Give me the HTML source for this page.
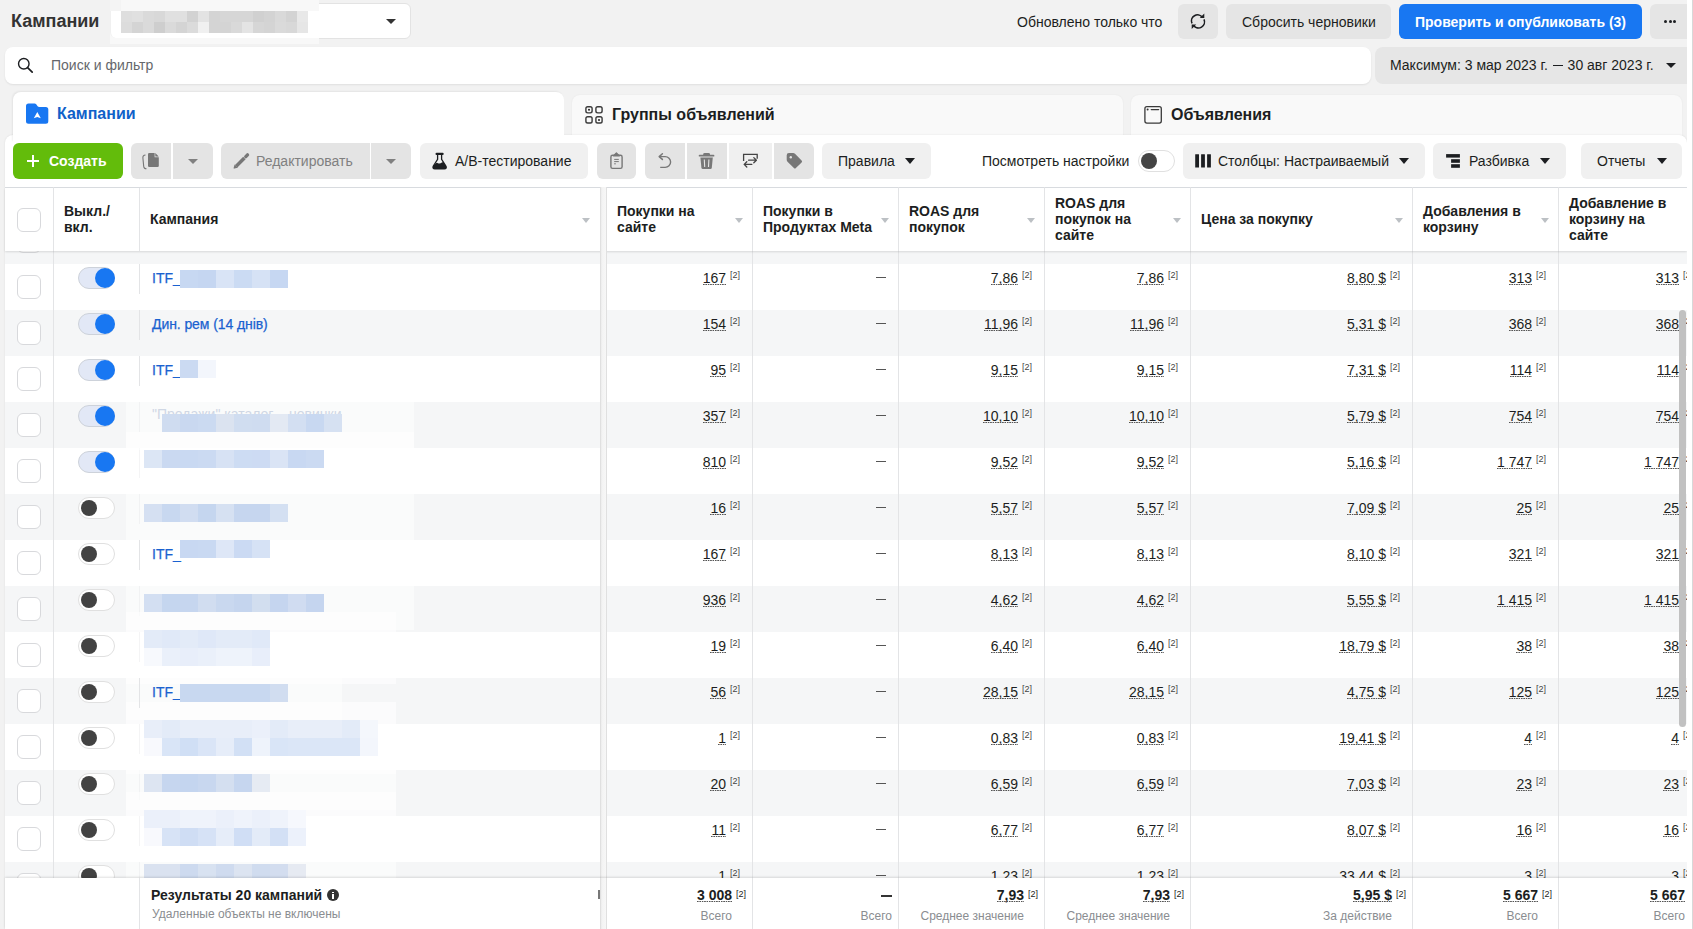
<!DOCTYPE html><html><head><meta charset="utf-8"><style>
*{box-sizing:border-box;margin:0;padding:0}
html,body{width:1693px;height:929px;overflow:hidden;background:#f2f2f2;font-family:"Liberation Sans",sans-serif;color:#1c1e21}
.a{position:absolute}
.btn{position:absolute;border-radius:6px;background:#e5e5e5}
.t14{font-size:14px;line-height:16px;white-space:nowrap}
.num{position:absolute;font-size:14px;line-height:16px;white-space:nowrap;color:#1c1e21}
.num u{text-decoration:none;position:relative}.num u::after{content:'';position:absolute;left:0;right:0;top:14px;height:1px;background-image:linear-gradient(to right,#555 55%,transparent 55%);background-size:2.4px 1px}
.sup{position:absolute;font-size:9px;line-height:10px;color:#444;white-space:nowrap}
.hd{position:absolute;font-size:14px;line-height:16px;font-weight:700;color:#1c1e21}
.sort{position:absolute;width:0;height:0;border-left:4px solid transparent;border-right:4px solid transparent;border-top:5px solid #bcc0c4}
.caret{position:absolute;width:0;height:0;border-left:6px solid transparent;border-right:6px solid transparent;border-top:6px solid #1c1e21}
.vl{position:absolute;width:1px;background:#e3e4e6}
.cb{position:absolute;width:24px;height:24px;border:1px solid #d8d9dc;border-radius:6px;background:#fff}
.tg{position:absolute;width:36.5px;height:21.3px;border-radius:11px}
.tg.on{background:#e2e8f6;border:1px solid #cdd2da}
.tg.off{background:#fff;border:1px solid #e0e0e0}
.knob{position:absolute;width:20px;height:20px;border-radius:50%}
.tg.on .knob{background:#1877f2;right:-1.2px;top:-0.4px;width:20.4px;height:20.4px}
.tg.off .knob{background:#424242;left:1.4px;top:1.6px;width:16.2px;height:16.2px}
.blk{position:absolute}
</style></head><body><div class="a" style="left:11px;top:10px;font-size:18px;line-height:22px;font-weight:700;color:#333">Кампании</div>
<div class="a" style="left:112px;top:3px;width:299px;height:36px;background:#fff;border:1px solid #e3e3e3;border-radius:6px"></div>
<div class="a" style="left:110px;top:0;width:209px;height:44px;background:#f8f8f8"></div>
<div class="a" style="left:110px;top:0;width:11px;height:11px;background:#f4f4f4"></div>
<div class="a" style="left:110px;top:11px;width:209px;height:27px;background:#fff;border-bottom-left-radius:6px;border-left:1px solid #f0f0f0"></div>
<div class="a" style="left:121px;top:33px;width:198px;height:5px;background:#fff"></div>
<div class="blk" style="left:121px;top:11px;width:11px;height:11px;background:#dedede"></div>
<div class="blk" style="left:132px;top:11px;width:11px;height:11px;background:#e0e0e0"></div>
<div class="blk" style="left:143px;top:11px;width:11px;height:11px;background:#dadada"></div>
<div class="blk" style="left:154px;top:11px;width:11px;height:11px;background:#d8d8d8"></div>
<div class="blk" style="left:165px;top:11px;width:11px;height:11px;background:#e0e0e0"></div>
<div class="blk" style="left:176px;top:11px;width:11px;height:11px;background:#e0e0e0"></div>
<div class="blk" style="left:187px;top:11px;width:11px;height:11px;background:#d2d2d2"></div>
<div class="blk" style="left:198px;top:11px;width:11px;height:11px;background:#e3e3e3"></div>
<div class="blk" style="left:209px;top:11px;width:11px;height:11px;background:#d4d4d4"></div>
<div class="blk" style="left:220px;top:11px;width:11px;height:11px;background:#d6d6d6"></div>
<div class="blk" style="left:231px;top:11px;width:11px;height:11px;background:#d6d6d6"></div>
<div class="blk" style="left:242px;top:11px;width:11px;height:11px;background:#d6d6d6"></div>
<div class="blk" style="left:253px;top:11px;width:11px;height:11px;background:#d0d0d0"></div>
<div class="blk" style="left:264px;top:11px;width:11px;height:11px;background:#d3d3d3"></div>
<div class="blk" style="left:275px;top:11px;width:11px;height:11px;background:#d9d9d9"></div>
<div class="blk" style="left:286px;top:11px;width:11px;height:11px;background:#d3d3d3"></div>
<div class="blk" style="left:297px;top:11px;width:11px;height:11px;background:#e8e8e8"></div>
<div class="blk" style="left:121px;top:22px;width:11px;height:11px;background:#dcdcdc"></div>
<div class="blk" style="left:132px;top:22px;width:11px;height:11px;background:#d4d4d4"></div>
<div class="blk" style="left:143px;top:22px;width:11px;height:11px;background:#dadada"></div>
<div class="blk" style="left:154px;top:22px;width:11px;height:11px;background:#cecece"></div>
<div class="blk" style="left:165px;top:22px;width:11px;height:11px;background:#dadada"></div>
<div class="blk" style="left:176px;top:22px;width:11px;height:11px;background:#d4d4d4"></div>
<div class="blk" style="left:187px;top:22px;width:11px;height:11px;background:#dbdbdb"></div>
<div class="blk" style="left:198px;top:22px;width:11px;height:11px;background:#f0f0f0"></div>
<div class="blk" style="left:209px;top:22px;width:11px;height:11px;background:#d4d4d4"></div>
<div class="blk" style="left:220px;top:22px;width:11px;height:11px;background:#d4d4d4"></div>
<div class="blk" style="left:231px;top:22px;width:11px;height:11px;background:#d9d9d9"></div>
<div class="blk" style="left:242px;top:22px;width:11px;height:11px;background:#e4e4e4"></div>
<div class="blk" style="left:253px;top:22px;width:11px;height:11px;background:#d6d6d6"></div>
<div class="blk" style="left:264px;top:22px;width:11px;height:11px;background:#d4d4d4"></div>
<div class="blk" style="left:275px;top:22px;width:11px;height:11px;background:#dadada"></div>
<div class="blk" style="left:286px;top:22px;width:11px;height:11px;background:#d8d8d8"></div>
<div class="blk" style="left:297px;top:22px;width:11px;height:11px;background:#e6e6e6"></div>
<div class="caret" style="left:386px;top:19px;border-left-width:5px;border-right-width:5px;border-top-width:5px;border-top-color:#333"></div>
<div class="a t14" style="left:1017px;top:14px;color:#1c1e21">Обновлено только что</div>
<div class="btn" style="left:1178px;top:4px;width:40px;height:35px"></div>
<svg class="a" style="left:1184px;top:8px" width="30" height="28" viewBox="1184 8 30 28" ><g fill="none" stroke="#1c1e21" stroke-width="1.6"><path d="M1192 23.4A6.1 6.1 0 0 1 1202.4 17.2"/><path d="M1204 19.4A6.1 6.1 0 0 1 1193.6 25.6"/></g><path d="M1204.3 13.6L1204.3 18.1 1199.8 18.1Z M1191.7 29L1191.7 24.5 1196.2 24.5Z" fill="#1c1e21"/></svg>
<div class="btn" style="left:1226px;top:4px;width:165px;height:35px"></div>
<div class="a t14" style="left:1242px;top:14px">Сбросить черновики</div>
<div class="btn" style="left:1399px;top:4px;width:243px;height:35px;background:#1877f2"></div>
<div class="a t14" style="left:1415px;top:14px;color:#fff;font-weight:700">Проверить и опубликовать (3)</div>
<div class="btn" style="left:1650px;top:4px;width:37px;height:35px;border-radius:6px 0 0 6px"></div>
<div class="a" style="left:1663.9px;top:19.7px;width:3.2px;height:3.2px;border-radius:50%;background:#1c1e21"></div>
<div class="a" style="left:1668.6000000000001px;top:19.7px;width:3.2px;height:3.2px;border-radius:50%;background:#1c1e21"></div>
<div class="a" style="left:1673.3000000000002px;top:19.7px;width:3.2px;height:3.2px;border-radius:50%;background:#1c1e21"></div>
<div class="a" style="left:5px;top:47px;width:1366px;height:37px;background:#fff;border-radius:8px;box-shadow:0 1px 2px rgba(0,0,0,.08)"></div>
<svg class="a" style="left:12px;top:52px" width="26" height="26" viewBox="12 52 26 26" ><circle cx="23.8" cy="63.8" r="5.25" fill="none" stroke="#1c1e21" stroke-width="1.4"/><path d="M27.6 67.6L32.2 72.2" stroke="#1c1e21" stroke-width="1.7" stroke-linecap="round"/></svg>
<div class="a t14" style="left:51px;top:57px;color:#65676b">Поиск и фильтр</div>
<div class="btn" style="left:1375px;top:47px;width:312px;height:37px;background:#e6e6e6;border-radius:8px 0 0 8px"></div>
<div class="a t14" style="left:1390px;top:57px">Максимум: 3 мар 2023 г. <span style="display:inline-block;width:10px;height:1.2px;background:#1c1e21;vertical-align:4px;margin:0 1px"></span> 30 авг 2023 г.</div>
<div class="caret" style="left:1666px;top:63px;border-left-width:5px;border-right-width:5px;border-top-width:5px"></div>
<div class="a" style="left:572px;top:95px;width:551px;height:45px;background:#f9f9f9;border-radius:8px 8px 0 0;box-shadow:0 0 2px rgba(0,0,0,.06)"></div>
<div class="a" style="left:1131px;top:95px;width:551px;height:45px;background:#f9f9f9;border-radius:8px 8px 0 0;box-shadow:0 0 2px rgba(0,0,0,.06)"></div>
<div class="a" style="left:5px;top:135px;width:1682px;height:794px;background:#fff;border-radius:8px 8px 0 0;box-shadow:0 0 2px rgba(0,0,0,.1)"></div>
<div class="a" style="left:13px;top:92px;width:551px;height:50px;background:#fff;border-radius:8px 8px 0 0;box-shadow:-1px -1px 2px rgba(0,0,0,.06)"></div>
<svg class="a" style="left:24px;top:100px" width="28" height="28" viewBox="24 100 28 28" ><path d="M26 106Q26 103.5 28.5 103.5H34.6Q35.6 103.5 36.2 104.3L37.6 106.2Q38.2 107 39.2 107H45.8Q48.3 107 48.3 109.5V121.2Q48.3 123.7 45.8 123.7H28.5Q26 123.7 26 121.2Z" fill="#1877f2"/><path d="M37.3 111.9L33.8 118.3 37.3 117.1 40.8 118.3Z" fill="#fff"/></svg>
<div class="a" style="left:57px;top:104px;font-size:16px;line-height:19px;font-weight:700;color:#1061c9">Кампании</div>
<svg class="a" style="left:582px;top:103px" width="24" height="24" viewBox="582 103 24 24" ><g fill="none" stroke="#3a3a3a" stroke-width="1.4"><rect x="585.9" y="106.7" width="6.2" height="6.2" rx="1.8"/><rect x="595.9" y="106.7" width="6.2" height="6.2" rx="1.8"/><rect x="585.9" y="116.8" width="6.2" height="6.2" rx="1.8"/><rect x="595.9" y="116.8" width="6.2" height="6.2" rx="1.8"/></g><circle cx="589" cy="109.8" r="1" fill="#222"/><circle cx="599" cy="119.9" r="1" fill="#222"/></svg>
<div class="a" style="left:612px;top:105px;font-size:16px;line-height:19px;font-weight:700;color:#1c1e21">Группы объявлений</div>
<svg class="a" style="left:1141px;top:103px" width="24" height="24" viewBox="1141 103 24 24" ><rect x="1144.9" y="106.7" width="16.4" height="16.4" rx="2" fill="none" stroke="#3a3a3a" stroke-width="1.3"/><circle cx="1147.6" cy="109.6" r="1" fill="#333"/><path d="M1151.3 109.6H1158.6" stroke="#3a3a3a" stroke-width="1.4" stroke-linecap="round"/></svg>
<div class="a" style="left:1171px;top:105px;font-size:16px;line-height:19px;font-weight:700;color:#1c1e21">Объявления</div>
<div class="btn" style="left:13px;top:143px;width:110px;height:36px;background:#63bc0b"></div>
<div class="a" style="left:27px;top:155px;width:12px;height:1.6px;background:#fff;top:160px"></div>
<div class="a" style="left:32.2px;top:155px;width:1.6px;height:12px;background:#fff"></div>
<div class="a t14" style="left:49px;top:153px;color:#fff;font-weight:700">Создать</div>
<div class="btn" style="left:131px;top:143px;width:40px;height:36px;border-radius:6px 0 0 6px;background:#e4e4e4"></div>
<div class="btn" style="left:173px;top:143px;width:40px;height:36px;border-radius:0 6px 6px 0;background:#e4e4e4"></div>
<svg class="a" style="left:140px;top:150px" width="22" height="22" viewBox="140 150 22 22" ><path d="M148 154.2Q148 153 149.2 153H154.4L158.8 157.4V165.8Q158.8 167 157.6 167H149.2Q148 167 148 165.8Z" fill="#777"/><path d="M154.6 153.2L158.6 157.2 154.6 157.2Z" fill="#e4e4e4"/><path d="M155 153.4L158.4 156.8H155Z" fill="#777" transform="translate(.3 -.3)"/><path d="M145.5 155Q142.6 155.2 142.9 158L143.7 166.4Q144 168.8 146.5 168.8" fill="none" stroke="#777" stroke-width="1.1"/></svg>
<div class="caret" style="left:188px;top:159px;border-left-width:5px;border-right-width:5px;border-top-width:5px;border-top-color:#808080"></div>
<div class="btn" style="left:221px;top:143px;width:149px;height:36px;border-radius:6px 0 0 6px;background:#e4e4e4"></div>
<div class="btn" style="left:371px;top:143px;width:40px;height:36px;border-radius:0 6px 6px 0;background:#e4e4e4"></div>
<svg class="a" style="left:230px;top:150px" width="22" height="22" viewBox="230 150 22 22"><path d="M236.2 166.2L244.4 158" stroke="#777" stroke-width="3.4"/><path d="M234.6 164.4L237.9 167.7 234.4 168.6Q233.6 168.8 233.6 168Z" fill="#777"/><path d="M245.8 156.6L247.5 154.9" stroke="#777" stroke-width="3.4" stroke-linecap="round"/></svg>
<div class="a t14" style="left:256px;top:153px;color:#808080">Редактировать</div>
<div class="caret" style="left:386px;top:159px;border-left-width:5px;border-right-width:5px;border-top-width:5px;border-top-color:#808080"></div>
<div class="btn" style="left:420px;top:143px;width:168px;height:36px;background:#f0f0f0"></div>
<svg class="a" style="left:430px;top:150px" width="20" height="22" viewBox="430 150 20 22" ><path d="M437.6 155V159.4L433.2 166.2Q432.4 168.8 434.8 168.8H444.4Q446.9 168.8 446 166.2L441.6 159.4V155" fill="none" stroke="#1c1e21" stroke-width="1.3"/><path d="M436.6 153.9H442.6" stroke="#1c1e21" stroke-width="2.2" stroke-linecap="round"/><path d="M434.6 164.4Q436.4 162 438 163.2Q439.6 164.3 442.2 162.3L443.6 162.3 446.1 166.3Q446.9 168.9 444.4 168.9H434.8Q432.3 168.9 433.1 166.3Z" fill="#1c1e21"/></svg>
<div class="a t14" style="left:455px;top:153px">A/B-тестирование</div>
<div class="btn" style="left:597px;top:143px;width:39px;height:36px;background:#e4e4e4"></div>
<svg class="a" style="left:606px;top:150px" width="20" height="22" viewBox="606 150 20 22" ><rect x="610.9" y="155.3" width="11.2" height="13.1" rx="1.6" fill="none" stroke="#777" stroke-width="1.4"/><path d="M613.4 155.8L616.4 152.8 619.4 155.8Z" fill="#777" stroke="#777" stroke-width="1.2" stroke-linejoin="round"/><path d="M614.2 159.4H618.8M614.2 161.6H618.8M614.2 163.8H615.8" stroke="#777" stroke-width="1"/></svg>
<div class="btn" style="left:645px;top:143px;width:40px;height:36px;border-radius:6px 0 0 6px;background:#e4e4e4"></div>
<div class="btn" style="left:687px;top:143px;width:40px;height:36px;border-radius:0;background:#e4e4e4"></div>
<svg class="a" style="left:654px;top:150px" width="22" height="22" viewBox="654 150 22 22" ><path d="M659.6 156.6H665.2A5.4 5.4 0 0 1 665.2 167.4H660.2" fill="none" stroke="#777" stroke-width="1.4"/><path d="M662.4 153.8L659.2 156.6 662.4 159.4" fill="none" stroke="#777" stroke-width="1.5" stroke-linecap="round" stroke-linejoin="round"/></svg>
<svg class="a" style="left:697px;top:150px" width="20" height="22" viewBox="697 150 20 22" ><path d="M699.6 155.7H713.5" stroke="#777" stroke-width="1.8" stroke-linecap="round"/><path d="M703.2 155V153.9Q703.4 152.9 704.6 152.9H708.6Q709.8 152.9 710 153.9V155" fill="#777"/><path d="M700.4 157.6H712.8L711.8 167.8Q711.6 169 710.4 169H702.8Q701.6 169 701.4 167.8Z" fill="#777"/><path d="M704.3 159.5L704.7 167M708.9 159.5L708.5 167" stroke="#e4e4e4" stroke-width="1.1"/></svg>
<div class="btn" style="left:729px;top:143px;width:43px;height:36px;border-radius:0;background:#f0f0f0"></div>
<svg class="a" style="left:740px;top:150px" width="22" height="22" viewBox="740 150 22 22"><path d="M743.6 161V154.4H757.2V158.8" fill="none" stroke="#444" stroke-width="1.3"/><path d="M748.6 160.2H756.4M753.8 157.6L756.4 160.2 753.8 162.8M751.8 164.4H744.2M746.8 161.8L744.2 164.4 746.8 167" fill="none" stroke="#444" stroke-width="1.3" stroke-linecap="round" stroke-linejoin="round"/></svg>
<div class="btn" style="left:774px;top:143px;width:40px;height:36px;border-radius:0 6px 6px 0;background:#e4e4e4"></div>
<svg class="a" style="left:784px;top:150px" width="22" height="22" viewBox="784 150 22 22" ><path d="M786.7 155.2Q786.7 153 788.9 153H793.1Q794.2 153 795 153.8L801.6 160.4Q802.6 161.4 801.6 162.4L795.9 168.1Q794.9 169.1 793.9 168.1L787.5 161.7Q786.7 160.9 786.7 159.8Z" fill="#777"/><circle cx="790.8" cy="157.2" r="1.2" fill="#e4e4e4"/></svg>
<div class="btn" style="left:822px;top:143px;width:109px;height:36px;background:#f0f0f0"></div>
<div class="a t14" style="left:838px;top:153px">Правила</div>
<div class="caret" style="left:905px;top:158px;border-left-width:5.5px;border-right-width:5.5px;border-top-width:6px"></div>
<div class="a t14" style="left:982px;top:153px">Посмотреть настройки</div>
<div class="a" style="left:1138px;top:150px;width:37px;height:22px;border-radius:11px;border:1px solid #e0e0e0;background:#fff"></div>
<div class="a" style="left:1141px;top:153px;width:16px;height:16px;border-radius:50%;background:#444"></div>
<div class="btn" style="left:1183px;top:143px;width:242px;height:36px;background:#f0f0f0"></div>
<svg class="a" style="left:1192px;top:150px" width="22" height="22" viewBox="1192 150 22 22" ><g fill="#1c1e21"><rect x="1195.2" y="154.2" width="3.8" height="13.3" rx=".3"/><rect x="1201.1" y="154.2" width="3.8" height="13.3" rx=".3"/><rect x="1207.1" y="154.2" width="3.8" height="13.3" rx=".3"/></g></svg>
<div class="a t14" style="left:1218px;top:153px">Столбцы: Настраиваемый</div>
<div class="caret" style="left:1399px;top:158px;border-left-width:5.5px;border-right-width:5.5px;border-top-width:6px"></div>
<div class="btn" style="left:1433px;top:143px;width:133px;height:36px;background:#f0f0f0"></div>
<svg class="a" style="left:1443px;top:150px" width="22" height="22" viewBox="1443 150 22 22" ><g fill="#1c1e21"><rect x="1446.1" y="154.1" width="13.8" height="3.5"/><rect x="1451.1" y="159.2" width="8.8" height="3.6"/><rect x="1451.1" y="164.2" width="8.8" height="3.6"/></g></svg>
<div class="a t14" style="left:1469px;top:153px">Разбивка</div>
<div class="caret" style="left:1540px;top:158px;border-left-width:5.5px;border-right-width:5.5px;border-top-width:6px"></div>
<div class="btn" style="left:1581px;top:143px;width:101px;height:36px;background:#f0f0f0"></div>
<div class="a t14" style="left:1597px;top:153px">Отчеты</div>
<div class="caret" style="left:1657px;top:158px;border-left-width:5.5px;border-right-width:5.5px;border-top-width:6px"></div>
<div class="a" style="left:5px;top:187px;width:1682px;height:1px;background:#dadde1"></div>
<div class="a" style="left:5px;top:251px;width:1682px;height:13px;background:#f5f6f7"></div>
<div class="a" style="left:5px;top:310px;width:1682px;height:46px;background:#f5f6f7"></div>
<div class="a" style="left:5px;top:402px;width:1682px;height:46px;background:#f5f6f7"></div>
<div class="a" style="left:5px;top:494px;width:1682px;height:46px;background:#f5f6f7"></div>
<div class="a" style="left:5px;top:586px;width:1682px;height:46px;background:#f5f6f7"></div>
<div class="a" style="left:5px;top:678px;width:1682px;height:46px;background:#f5f6f7"></div>
<div class="a" style="left:5px;top:770px;width:1682px;height:46px;background:#f5f6f7"></div>
<div class="a" style="left:5px;top:862px;width:1682px;height:46px;background:#f5f6f7"></div>
<div class="vl" style="left:139px;top:264px;height:30px"></div>
<div class="vl" style="left:139px;top:310px;height:30px"></div>
<div class="vl" style="left:139px;top:356px;height:30px"></div>
<div class="vl" style="left:139px;top:402px;height:30px"></div>
<div class="vl" style="left:139px;top:448px;height:30px"></div>
<div class="vl" style="left:139px;top:494px;height:30px"></div>
<div class="vl" style="left:139px;top:540px;height:30px"></div>
<div class="vl" style="left:139px;top:586px;height:30px"></div>
<div class="vl" style="left:139px;top:632px;height:30px"></div>
<div class="vl" style="left:139px;top:678px;height:30px"></div>
<div class="vl" style="left:139px;top:724px;height:30px"></div>
<div class="vl" style="left:139px;top:770px;height:30px"></div>
<div class="vl" style="left:139px;top:816px;height:30px"></div>
<div class="vl" style="left:139px;top:862px;height:30px"></div>
<div class="a" style="left:126px;top:396px;width:288px;height:54px;background:rgba(255,255,255,.5)"></div>
<div class="a" style="left:126px;top:486px;width:288px;height:54px;background:rgba(255,255,255,.5)"></div>
<div class="a" style="left:126px;top:576px;width:288px;height:54px;background:rgba(255,255,255,.5)"></div>
<div class="a" style="left:126px;top:666px;width:216px;height:54px;background:rgba(255,255,255,.5)"></div>
<div class="a" style="left:126px;top:756px;width:270px;height:54px;background:rgba(255,255,255,.5)"></div>
<div class="a" style="left:126px;top:846px;width:270px;height:32px;background:rgba(255,255,255,.5)"></div>
<div class="a" style="left:126px;top:432px;width:288px;height:54px;background:rgba(255,255,255,.6)"></div>
<div class="a" style="left:126px;top:612px;width:270px;height:72px;background:rgba(255,255,255,.6)"></div>
<div class="a" style="left:126px;top:702px;width:270px;height:72px;background:rgba(255,255,255,.6)"></div>
<div class="a" style="left:126px;top:792px;width:270px;height:70px;background:rgba(255,255,255,.6)"></div>
<div class="vl" style="left:53px;top:187px;height:691px"></div>
<div class="vl" style="left:752px;top:187px;height:691px"></div>
<div class="vl" style="left:898px;top:187px;height:691px"></div>
<div class="vl" style="left:1044px;top:187px;height:691px"></div>
<div class="vl" style="left:1190px;top:187px;height:691px"></div>
<div class="vl" style="left:1412px;top:187px;height:691px"></div>
<div class="vl" style="left:1558px;top:187px;height:691px"></div>
<div class="vl" style="left:139px;top:878px;height:51px"></div>
<div class="vl" style="left:752px;top:878px;height:51px"></div>
<div class="vl" style="left:898px;top:878px;height:51px"></div>
<div class="vl" style="left:1044px;top:878px;height:51px"></div>
<div class="vl" style="left:1190px;top:878px;height:51px"></div>
<div class="vl" style="left:1412px;top:878px;height:51px"></div>
<div class="vl" style="left:1558px;top:878px;height:51px"></div>
<div class="cb" style="left:17px;top:229px"></div>
<div class="cb" style="left:17px;top:275px"></div>
<div class="tg on" style="left:78.3px;top:267.3px"><div class="knob"></div></div>
<div class="a t14" style="left:152px;top:270px;color:#1a62d0;-webkit-text-stroke:.25px #1a62d0">ITF_</div>
<div class="num" style="right:967px;top:270px"><u>167</u></div>
<div class="sup" style="left:730px;top:270px">[2]</div>
<div class="a" style="left:876px;top:277px;width:10px;height:1px;background:#555"></div>
<div class="num" style="right:675px;top:270px"><u>7,86</u></div>
<div class="sup" style="left:1022px;top:270px">[2]</div>
<div class="num" style="right:529px;top:270px"><u>7,86</u></div>
<div class="sup" style="left:1168px;top:270px">[2]</div>
<div class="num" style="right:307px;top:270px"><u>8,80 $</u></div>
<div class="sup" style="left:1390px;top:270px">[2]</div>
<div class="num" style="right:161px;top:270px"><u>313</u></div>
<div class="sup" style="left:1536px;top:270px">[2]</div>
<div class="num" style="right:14px;top:270px"><u>313</u></div>
<div class="sup" style="left:1683px;top:270px">[2]</div>
<div class="cb" style="left:17px;top:321px"></div>
<div class="tg on" style="left:78.3px;top:313.3px"><div class="knob"></div></div>
<div class="a t14" style="left:152px;top:316px;color:#1a62d0;-webkit-text-stroke:.25px #1a62d0;letter-spacing:-.08px">Дин. рем (14 днів)</div>
<div class="num" style="right:967px;top:316px"><u>154</u></div>
<div class="sup" style="left:730px;top:316px">[2]</div>
<div class="a" style="left:876px;top:323px;width:10px;height:1px;background:#555"></div>
<div class="num" style="right:675px;top:316px"><u>11,96</u></div>
<div class="sup" style="left:1022px;top:316px">[2]</div>
<div class="num" style="right:529px;top:316px"><u>11,96</u></div>
<div class="sup" style="left:1168px;top:316px">[2]</div>
<div class="num" style="right:307px;top:316px"><u>5,31 $</u></div>
<div class="sup" style="left:1390px;top:316px">[2]</div>
<div class="num" style="right:161px;top:316px"><u>368</u></div>
<div class="sup" style="left:1536px;top:316px">[2]</div>
<div class="num" style="right:14px;top:316px"><u>368</u></div>
<div class="sup" style="left:1683px;top:316px">[2]</div>
<div class="cb" style="left:17px;top:367px"></div>
<div class="tg on" style="left:78.3px;top:359.3px"><div class="knob"></div></div>
<div class="a t14" style="left:152px;top:362px;color:#1a62d0;-webkit-text-stroke:.25px #1a62d0">ITF_</div>
<div class="num" style="right:967px;top:362px"><u>95</u></div>
<div class="sup" style="left:730px;top:362px">[2]</div>
<div class="a" style="left:876px;top:369px;width:10px;height:1px;background:#555"></div>
<div class="num" style="right:675px;top:362px"><u>9,15</u></div>
<div class="sup" style="left:1022px;top:362px">[2]</div>
<div class="num" style="right:529px;top:362px"><u>9,15</u></div>
<div class="sup" style="left:1168px;top:362px">[2]</div>
<div class="num" style="right:307px;top:362px"><u>7,31 $</u></div>
<div class="sup" style="left:1390px;top:362px">[2]</div>
<div class="num" style="right:161px;top:362px"><u>114</u></div>
<div class="sup" style="left:1536px;top:362px">[2]</div>
<div class="num" style="right:14px;top:362px"><u>114</u></div>
<div class="sup" style="left:1683px;top:362px">[2]</div>
<div class="cb" style="left:17px;top:413px"></div>
<div class="tg on" style="left:78.3px;top:405.3px"><div class="knob"></div></div>
<div class="num" style="right:967px;top:408px"><u>357</u></div>
<div class="sup" style="left:730px;top:408px">[2]</div>
<div class="a" style="left:876px;top:415px;width:10px;height:1px;background:#555"></div>
<div class="num" style="right:675px;top:408px"><u>10,10</u></div>
<div class="sup" style="left:1022px;top:408px">[2]</div>
<div class="num" style="right:529px;top:408px"><u>10,10</u></div>
<div class="sup" style="left:1168px;top:408px">[2]</div>
<div class="num" style="right:307px;top:408px"><u>5,79 $</u></div>
<div class="sup" style="left:1390px;top:408px">[2]</div>
<div class="num" style="right:161px;top:408px"><u>754</u></div>
<div class="sup" style="left:1536px;top:408px">[2]</div>
<div class="num" style="right:14px;top:408px"><u>754</u></div>
<div class="sup" style="left:1683px;top:408px">[2]</div>
<div class="cb" style="left:17px;top:459px"></div>
<div class="tg on" style="left:78.3px;top:451.3px"><div class="knob"></div></div>
<div class="num" style="right:967px;top:454px"><u>810</u></div>
<div class="sup" style="left:730px;top:454px">[2]</div>
<div class="a" style="left:876px;top:461px;width:10px;height:1px;background:#555"></div>
<div class="num" style="right:675px;top:454px"><u>9,52</u></div>
<div class="sup" style="left:1022px;top:454px">[2]</div>
<div class="num" style="right:529px;top:454px"><u>9,52</u></div>
<div class="sup" style="left:1168px;top:454px">[2]</div>
<div class="num" style="right:307px;top:454px"><u>5,16 $</u></div>
<div class="sup" style="left:1390px;top:454px">[2]</div>
<div class="num" style="right:161px;top:454px"><u>1 747</u></div>
<div class="sup" style="left:1536px;top:454px">[2]</div>
<div class="num" style="right:14px;top:454px"><u>1 747</u></div>
<div class="sup" style="left:1683px;top:454px">[2]</div>
<div class="cb" style="left:17px;top:505px"></div>
<div class="tg off" style="left:78.3px;top:497.3px"><div class="knob"></div></div>
<div class="num" style="right:967px;top:500px"><u>16</u></div>
<div class="sup" style="left:730px;top:500px">[2]</div>
<div class="a" style="left:876px;top:507px;width:10px;height:1px;background:#555"></div>
<div class="num" style="right:675px;top:500px"><u>5,57</u></div>
<div class="sup" style="left:1022px;top:500px">[2]</div>
<div class="num" style="right:529px;top:500px"><u>5,57</u></div>
<div class="sup" style="left:1168px;top:500px">[2]</div>
<div class="num" style="right:307px;top:500px"><u>7,09 $</u></div>
<div class="sup" style="left:1390px;top:500px">[2]</div>
<div class="num" style="right:161px;top:500px"><u>25</u></div>
<div class="sup" style="left:1536px;top:500px">[2]</div>
<div class="num" style="right:14px;top:500px"><u>25</u></div>
<div class="sup" style="left:1683px;top:500px">[2]</div>
<div class="cb" style="left:17px;top:551px"></div>
<div class="tg off" style="left:78.3px;top:543.3px"><div class="knob"></div></div>
<div class="a t14" style="left:152px;top:546px;color:#1a62d0;-webkit-text-stroke:.25px #1a62d0">ITF_</div>
<div class="num" style="right:967px;top:546px"><u>167</u></div>
<div class="sup" style="left:730px;top:546px">[2]</div>
<div class="a" style="left:876px;top:553px;width:10px;height:1px;background:#555"></div>
<div class="num" style="right:675px;top:546px"><u>8,13</u></div>
<div class="sup" style="left:1022px;top:546px">[2]</div>
<div class="num" style="right:529px;top:546px"><u>8,13</u></div>
<div class="sup" style="left:1168px;top:546px">[2]</div>
<div class="num" style="right:307px;top:546px"><u>8,10 $</u></div>
<div class="sup" style="left:1390px;top:546px">[2]</div>
<div class="num" style="right:161px;top:546px"><u>321</u></div>
<div class="sup" style="left:1536px;top:546px">[2]</div>
<div class="num" style="right:14px;top:546px"><u>321</u></div>
<div class="sup" style="left:1683px;top:546px">[2]</div>
<div class="cb" style="left:17px;top:597px"></div>
<div class="tg off" style="left:78.3px;top:589.3px"><div class="knob"></div></div>
<div class="num" style="right:967px;top:592px"><u>936</u></div>
<div class="sup" style="left:730px;top:592px">[2]</div>
<div class="a" style="left:876px;top:599px;width:10px;height:1px;background:#555"></div>
<div class="num" style="right:675px;top:592px"><u>4,62</u></div>
<div class="sup" style="left:1022px;top:592px">[2]</div>
<div class="num" style="right:529px;top:592px"><u>4,62</u></div>
<div class="sup" style="left:1168px;top:592px">[2]</div>
<div class="num" style="right:307px;top:592px"><u>5,55 $</u></div>
<div class="sup" style="left:1390px;top:592px">[2]</div>
<div class="num" style="right:161px;top:592px"><u>1 415</u></div>
<div class="sup" style="left:1536px;top:592px">[2]</div>
<div class="num" style="right:14px;top:592px"><u>1 415</u></div>
<div class="sup" style="left:1683px;top:592px">[2]</div>
<div class="cb" style="left:17px;top:643px"></div>
<div class="tg off" style="left:78.3px;top:635.3px"><div class="knob"></div></div>
<div class="num" style="right:967px;top:638px"><u>19</u></div>
<div class="sup" style="left:730px;top:638px">[2]</div>
<div class="a" style="left:876px;top:645px;width:10px;height:1px;background:#555"></div>
<div class="num" style="right:675px;top:638px"><u>6,40</u></div>
<div class="sup" style="left:1022px;top:638px">[2]</div>
<div class="num" style="right:529px;top:638px"><u>6,40</u></div>
<div class="sup" style="left:1168px;top:638px">[2]</div>
<div class="num" style="right:307px;top:638px"><u>18,79 $</u></div>
<div class="sup" style="left:1390px;top:638px">[2]</div>
<div class="num" style="right:161px;top:638px"><u>38</u></div>
<div class="sup" style="left:1536px;top:638px">[2]</div>
<div class="num" style="right:14px;top:638px"><u>38</u></div>
<div class="sup" style="left:1683px;top:638px">[2]</div>
<div class="cb" style="left:17px;top:689px"></div>
<div class="tg off" style="left:78.3px;top:681.3px"><div class="knob"></div></div>
<div class="a t14" style="left:152px;top:684px;color:#1a62d0;-webkit-text-stroke:.25px #1a62d0">ITF_</div>
<div class="num" style="right:967px;top:684px"><u>56</u></div>
<div class="sup" style="left:730px;top:684px">[2]</div>
<div class="a" style="left:876px;top:691px;width:10px;height:1px;background:#555"></div>
<div class="num" style="right:675px;top:684px"><u>28,15</u></div>
<div class="sup" style="left:1022px;top:684px">[2]</div>
<div class="num" style="right:529px;top:684px"><u>28,15</u></div>
<div class="sup" style="left:1168px;top:684px">[2]</div>
<div class="num" style="right:307px;top:684px"><u>4,75 $</u></div>
<div class="sup" style="left:1390px;top:684px">[2]</div>
<div class="num" style="right:161px;top:684px"><u>125</u></div>
<div class="sup" style="left:1536px;top:684px">[2]</div>
<div class="num" style="right:14px;top:684px"><u>125</u></div>
<div class="sup" style="left:1683px;top:684px">[2]</div>
<div class="cb" style="left:17px;top:735px"></div>
<div class="tg off" style="left:78.3px;top:727.3px"><div class="knob"></div></div>
<div class="num" style="right:967px;top:730px"><u>1</u></div>
<div class="sup" style="left:730px;top:730px">[2]</div>
<div class="a" style="left:876px;top:737px;width:10px;height:1px;background:#555"></div>
<div class="num" style="right:675px;top:730px"><u>0,83</u></div>
<div class="sup" style="left:1022px;top:730px">[2]</div>
<div class="num" style="right:529px;top:730px"><u>0,83</u></div>
<div class="sup" style="left:1168px;top:730px">[2]</div>
<div class="num" style="right:307px;top:730px"><u>19,41 $</u></div>
<div class="sup" style="left:1390px;top:730px">[2]</div>
<div class="num" style="right:161px;top:730px"><u>4</u></div>
<div class="sup" style="left:1536px;top:730px">[2]</div>
<div class="num" style="right:14px;top:730px"><u>4</u></div>
<div class="sup" style="left:1683px;top:730px">[2]</div>
<div class="cb" style="left:17px;top:781px"></div>
<div class="tg off" style="left:78.3px;top:773.3px"><div class="knob"></div></div>
<div class="num" style="right:967px;top:776px"><u>20</u></div>
<div class="sup" style="left:730px;top:776px">[2]</div>
<div class="a" style="left:876px;top:783px;width:10px;height:1px;background:#555"></div>
<div class="num" style="right:675px;top:776px"><u>6,59</u></div>
<div class="sup" style="left:1022px;top:776px">[2]</div>
<div class="num" style="right:529px;top:776px"><u>6,59</u></div>
<div class="sup" style="left:1168px;top:776px">[2]</div>
<div class="num" style="right:307px;top:776px"><u>7,03 $</u></div>
<div class="sup" style="left:1390px;top:776px">[2]</div>
<div class="num" style="right:161px;top:776px"><u>23</u></div>
<div class="sup" style="left:1536px;top:776px">[2]</div>
<div class="num" style="right:14px;top:776px"><u>23</u></div>
<div class="sup" style="left:1683px;top:776px">[2]</div>
<div class="cb" style="left:17px;top:827px"></div>
<div class="tg off" style="left:78.3px;top:819.3px"><div class="knob"></div></div>
<div class="num" style="right:967px;top:822px"><u>11</u></div>
<div class="sup" style="left:730px;top:822px">[2]</div>
<div class="a" style="left:876px;top:829px;width:10px;height:1px;background:#555"></div>
<div class="num" style="right:675px;top:822px"><u>6,77</u></div>
<div class="sup" style="left:1022px;top:822px">[2]</div>
<div class="num" style="right:529px;top:822px"><u>6,77</u></div>
<div class="sup" style="left:1168px;top:822px">[2]</div>
<div class="num" style="right:307px;top:822px"><u>8,07 $</u></div>
<div class="sup" style="left:1390px;top:822px">[2]</div>
<div class="num" style="right:161px;top:822px"><u>16</u></div>
<div class="sup" style="left:1536px;top:822px">[2]</div>
<div class="num" style="right:14px;top:822px"><u>16</u></div>
<div class="sup" style="left:1683px;top:822px">[2]</div>
<div class="cb" style="left:17px;top:873px"></div>
<div class="tg off" style="left:78.3px;top:865.3px"><div class="knob"></div></div>
<div class="num" style="right:967px;top:868px"><u>1</u></div>
<div class="sup" style="left:730px;top:868px">[2]</div>
<div class="a" style="left:876px;top:875px;width:10px;height:1px;background:#555"></div>
<div class="num" style="right:675px;top:868px"><u>1,23</u></div>
<div class="sup" style="left:1022px;top:868px">[2]</div>
<div class="num" style="right:529px;top:868px"><u>1,23</u></div>
<div class="sup" style="left:1168px;top:868px">[2]</div>
<div class="num" style="right:307px;top:868px"><u>33,44 $</u></div>
<div class="sup" style="left:1390px;top:868px">[2]</div>
<div class="num" style="right:161px;top:868px"><u>3</u></div>
<div class="sup" style="left:1536px;top:868px">[2]</div>
<div class="num" style="right:14px;top:868px"><u>3</u></div>
<div class="sup" style="left:1683px;top:868px">[2]</div>
<div class="a t14" style="left:152px;top:406px;color:#b4c0d6;opacity:.6">"Продажи" каталог – новинки</div>
<div class="blk" style="left:180px;top:270px;width:18px;height:18px;background:#c7d8f2"></div>
<div class="blk" style="left:198px;top:270px;width:18px;height:18px;background:#c5d6f1"></div>
<div class="blk" style="left:216px;top:270px;width:18px;height:18px;background:#d9e4f6"></div>
<div class="blk" style="left:234px;top:270px;width:18px;height:18px;background:#cbdbf3"></div>
<div class="blk" style="left:252px;top:270px;width:18px;height:18px;background:#d6e2f5"></div>
<div class="blk" style="left:270px;top:270px;width:18px;height:18px;background:#c6d7f2"></div>
<div class="blk" style="left:180px;top:360px;width:18px;height:18px;background:#cbdaf2"></div>
<div class="blk" style="left:198px;top:360px;width:18px;height:18px;background:#f3f6fc"></div>
<div class="blk" style="left:162px;top:414px;width:18px;height:18px;background:#cfdcf0"></div>
<div class="blk" style="left:180px;top:414px;width:18px;height:18px;background:#c9d8f0"></div>
<div class="blk" style="left:198px;top:414px;width:18px;height:18px;background:#cbdaf1"></div>
<div class="blk" style="left:216px;top:414px;width:18px;height:18px;background:#dbe3f0"></div>
<div class="blk" style="left:234px;top:414px;width:18px;height:18px;background:#d0ddf0"></div>
<div class="blk" style="left:252px;top:414px;width:18px;height:18px;background:#cfdcf0"></div>
<div class="blk" style="left:270px;top:414px;width:18px;height:18px;background:#e3e9f3"></div>
<div class="blk" style="left:288px;top:414px;width:18px;height:18px;background:#d3dff2"></div>
<div class="blk" style="left:306px;top:414px;width:18px;height:18px;background:#c8d8f1"></div>
<div class="blk" style="left:324px;top:414px;width:18px;height:18px;background:#d6e1f2"></div>
<div class="blk" style="left:144px;top:450px;width:18px;height:18px;background:#dce6f5"></div>
<div class="blk" style="left:162px;top:450px;width:18px;height:18px;background:#cad9f1"></div>
<div class="blk" style="left:180px;top:450px;width:18px;height:18px;background:#c9d9f2"></div>
<div class="blk" style="left:198px;top:450px;width:18px;height:18px;background:#cbdaf2"></div>
<div class="blk" style="left:216px;top:450px;width:18px;height:18px;background:#d7e2f4"></div>
<div class="blk" style="left:234px;top:450px;width:18px;height:18px;background:#cddcf3"></div>
<div class="blk" style="left:252px;top:450px;width:18px;height:18px;background:#cddbf3"></div>
<div class="blk" style="left:270px;top:450px;width:18px;height:18px;background:#dae4f5"></div>
<div class="blk" style="left:288px;top:450px;width:18px;height:18px;background:#c8d8f2"></div>
<div class="blk" style="left:306px;top:450px;width:18px;height:18px;background:#cbdaf2"></div>
<div class="blk" style="left:144px;top:504px;width:18px;height:18px;background:#d5e0f2"></div>
<div class="blk" style="left:162px;top:504px;width:18px;height:18px;background:#c8d8f0"></div>
<div class="blk" style="left:180px;top:504px;width:18px;height:18px;background:#d1ddf1"></div>
<div class="blk" style="left:198px;top:504px;width:18px;height:18px;background:#c5d6ef"></div>
<div class="blk" style="left:216px;top:504px;width:18px;height:18px;background:#d6e1f2"></div>
<div class="blk" style="left:234px;top:504px;width:18px;height:18px;background:#c6d6ef"></div>
<div class="blk" style="left:252px;top:504px;width:18px;height:18px;background:#c6d6ef"></div>
<div class="blk" style="left:270px;top:504px;width:18px;height:18px;background:#d4e0f2"></div>
<div class="blk" style="left:180px;top:540px;width:18px;height:18px;background:#c8d8f2"></div>
<div class="blk" style="left:198px;top:540px;width:18px;height:18px;background:#c9d9f2"></div>
<div class="blk" style="left:216px;top:540px;width:18px;height:18px;background:#dee7f7"></div>
<div class="blk" style="left:234px;top:540px;width:18px;height:18px;background:#cbdaf3"></div>
<div class="blk" style="left:252px;top:540px;width:18px;height:18px;background:#d6e2f5"></div>
<div class="blk" style="left:144px;top:594px;width:18px;height:18px;background:#d3dff2"></div>
<div class="blk" style="left:162px;top:594px;width:18px;height:18px;background:#c5d6ef"></div>
<div class="blk" style="left:180px;top:594px;width:18px;height:18px;background:#c6d6ef"></div>
<div class="blk" style="left:198px;top:594px;width:18px;height:18px;background:#d1ddf0"></div>
<div class="blk" style="left:216px;top:594px;width:18px;height:18px;background:#c9d8ef"></div>
<div class="blk" style="left:234px;top:594px;width:18px;height:18px;background:#c5d5ee"></div>
<div class="blk" style="left:252px;top:594px;width:18px;height:18px;background:#d2deef"></div>
<div class="blk" style="left:270px;top:594px;width:18px;height:18px;background:#c5d5ef"></div>
<div class="blk" style="left:288px;top:594px;width:18px;height:18px;background:#d0dcf1"></div>
<div class="blk" style="left:306px;top:594px;width:18px;height:18px;background:#c5d5ef"></div>
<div class="blk" style="left:144px;top:630px;width:18px;height:18px;background:#e3ebf8"></div>
<div class="blk" style="left:162px;top:630px;width:18px;height:18px;background:#e0e9f8"></div>
<div class="blk" style="left:180px;top:630px;width:18px;height:18px;background:#e3ebf8"></div>
<div class="blk" style="left:198px;top:630px;width:18px;height:18px;background:#dfe8f8"></div>
<div class="blk" style="left:216px;top:630px;width:18px;height:18px;background:#e3ebf8"></div>
<div class="blk" style="left:234px;top:630px;width:18px;height:18px;background:#e3ebf8"></div>
<div class="blk" style="left:252px;top:630px;width:18px;height:18px;background:#e0e9f8"></div>
<div class="blk" style="left:144px;top:648px;width:18px;height:18px;background:#f7f9fd"></div>
<div class="blk" style="left:162px;top:648px;width:18px;height:18px;background:#eaf0fa"></div>
<div class="blk" style="left:180px;top:648px;width:18px;height:18px;background:#e8eefa"></div>
<div class="blk" style="left:198px;top:648px;width:18px;height:18px;background:#eaf0fa"></div>
<div class="blk" style="left:216px;top:648px;width:18px;height:18px;background:#eef3fb"></div>
<div class="blk" style="left:234px;top:648px;width:18px;height:18px;background:#eef3fb"></div>
<div class="blk" style="left:252px;top:648px;width:18px;height:18px;background:#e8eefa"></div>
<div class="blk" style="left:180px;top:684px;width:18px;height:18px;background:#c8d8f0"></div>
<div class="blk" style="left:198px;top:684px;width:18px;height:18px;background:#c8d8f0"></div>
<div class="blk" style="left:216px;top:684px;width:18px;height:18px;background:#c8d8f0"></div>
<div class="blk" style="left:234px;top:684px;width:18px;height:18px;background:#c8d8f0"></div>
<div class="blk" style="left:252px;top:684px;width:18px;height:18px;background:#c8d8f0"></div>
<div class="blk" style="left:270px;top:684px;width:18px;height:18px;background:#d1ddf0"></div>
<div class="blk" style="left:144px;top:720px;width:18px;height:18px;background:#e8eef9"></div>
<div class="blk" style="left:162px;top:720px;width:18px;height:18px;background:#e3ebf8"></div>
<div class="blk" style="left:180px;top:720px;width:18px;height:18px;background:#e8eef9"></div>
<div class="blk" style="left:198px;top:720px;width:18px;height:18px;background:#e8eef9"></div>
<div class="blk" style="left:216px;top:720px;width:18px;height:18px;background:#e8eef9"></div>
<div class="blk" style="left:234px;top:720px;width:18px;height:18px;background:#e8eef9"></div>
<div class="blk" style="left:252px;top:720px;width:18px;height:18px;background:#ebf0fa"></div>
<div class="blk" style="left:270px;top:720px;width:18px;height:18px;background:#e3ebf8"></div>
<div class="blk" style="left:288px;top:720px;width:18px;height:18px;background:#e8eef9"></div>
<div class="blk" style="left:306px;top:720px;width:18px;height:18px;background:#e8eef9"></div>
<div class="blk" style="left:324px;top:720px;width:18px;height:18px;background:#e8eef9"></div>
<div class="blk" style="left:342px;top:720px;width:18px;height:18px;background:#e3ebf8"></div>
<div class="blk" style="left:360px;top:720px;width:18px;height:18px;background:#f4f7fc"></div>
<div class="blk" style="left:144px;top:738px;width:18px;height:18px;background:#f8f9fd"></div>
<div class="blk" style="left:162px;top:738px;width:18px;height:18px;background:#d9e5f7"></div>
<div class="blk" style="left:180px;top:738px;width:18px;height:18px;background:#d0dff5"></div>
<div class="blk" style="left:198px;top:738px;width:18px;height:18px;background:#dae5f7"></div>
<div class="blk" style="left:216px;top:738px;width:18px;height:18px;background:#e6edf9"></div>
<div class="blk" style="left:234px;top:738px;width:18px;height:18px;background:#d2e0f5"></div>
<div class="blk" style="left:252px;top:738px;width:18px;height:18px;background:#eef3fb"></div>
<div class="blk" style="left:270px;top:738px;width:18px;height:18px;background:#d9e5f7"></div>
<div class="blk" style="left:288px;top:738px;width:18px;height:18px;background:#dbe6f7"></div>
<div class="blk" style="left:306px;top:738px;width:18px;height:18px;background:#dbe6f7"></div>
<div class="blk" style="left:324px;top:738px;width:18px;height:18px;background:#dbe6f7"></div>
<div class="blk" style="left:342px;top:738px;width:18px;height:18px;background:#dbe6f7"></div>
<div class="blk" style="left:360px;top:738px;width:18px;height:18px;background:#f3f6fc"></div>
<div class="blk" style="left:144px;top:774px;width:18px;height:18px;background:#dde5f2"></div>
<div class="blk" style="left:162px;top:774px;width:18px;height:18px;background:#c6d6ef"></div>
<div class="blk" style="left:180px;top:774px;width:18px;height:18px;background:#c4d5ef"></div>
<div class="blk" style="left:198px;top:774px;width:18px;height:18px;background:#c8d7ef"></div>
<div class="blk" style="left:216px;top:774px;width:18px;height:18px;background:#d4dff0"></div>
<div class="blk" style="left:234px;top:774px;width:18px;height:18px;background:#c6d6ef"></div>
<div class="blk" style="left:252px;top:774px;width:18px;height:18px;background:#e6ebf3"></div>
<div class="blk" style="left:144px;top:810px;width:18px;height:18px;background:#ebf0fa"></div>
<div class="blk" style="left:162px;top:810px;width:18px;height:18px;background:#ebf0fa"></div>
<div class="blk" style="left:180px;top:810px;width:18px;height:18px;background:#eff3fb"></div>
<div class="blk" style="left:198px;top:810px;width:18px;height:18px;background:#eff3fb"></div>
<div class="blk" style="left:216px;top:810px;width:18px;height:18px;background:#ebf0fa"></div>
<div class="blk" style="left:234px;top:810px;width:18px;height:18px;background:#eff3fb"></div>
<div class="blk" style="left:252px;top:810px;width:18px;height:18px;background:#ebf0fa"></div>
<div class="blk" style="left:270px;top:810px;width:18px;height:18px;background:#eff3fb"></div>
<div class="blk" style="left:288px;top:810px;width:18px;height:18px;background:#f6f8fd"></div>
<div class="blk" style="left:144px;top:828px;width:18px;height:18px;background:#f8f9fd"></div>
<div class="blk" style="left:162px;top:828px;width:18px;height:18px;background:#d7e3f6"></div>
<div class="blk" style="left:180px;top:828px;width:18px;height:18px;background:#cfddf4"></div>
<div class="blk" style="left:198px;top:828px;width:18px;height:18px;background:#d6e2f6"></div>
<div class="blk" style="left:216px;top:828px;width:18px;height:18px;background:#e6edf9"></div>
<div class="blk" style="left:234px;top:828px;width:18px;height:18px;background:#d0def5"></div>
<div class="blk" style="left:252px;top:828px;width:18px;height:18px;background:#e3ebf8"></div>
<div class="blk" style="left:270px;top:828px;width:18px;height:18px;background:#d3e0f5"></div>
<div class="blk" style="left:288px;top:828px;width:18px;height:18px;background:#ecf1fb"></div>
<div class="blk" style="left:144px;top:864px;width:18px;height:18px;background:#dae2f0"></div>
<div class="blk" style="left:162px;top:864px;width:18px;height:18px;background:#dae2f0"></div>
<div class="blk" style="left:180px;top:864px;width:18px;height:18px;background:#cddaef"></div>
<div class="blk" style="left:198px;top:864px;width:18px;height:18px;background:#d8e2f1"></div>
<div class="blk" style="left:216px;top:864px;width:18px;height:18px;background:#cfdbef"></div>
<div class="blk" style="left:234px;top:864px;width:18px;height:18px;background:#dce4f1"></div>
<div class="blk" style="left:252px;top:864px;width:18px;height:18px;background:#d0dcef"></div>
<div class="blk" style="left:270px;top:864px;width:18px;height:18px;background:#d3ddef"></div>
<div class="blk" style="left:288px;top:864px;width:18px;height:18px;background:#e6eaf2"></div>
<div class="vl" style="left:139px;top:264px;height:30px"></div>
<div class="vl" style="left:139px;top:310px;height:30px"></div>
<div class="vl" style="left:139px;top:356px;height:30px"></div>
<div class="vl" style="left:139px;top:540px;height:30px"></div>
<div class="vl" style="left:139px;top:678px;height:30px"></div>
<div class="a" style="left:5px;top:188px;width:1682px;height:63px;background:#fff;box-shadow:0 1px 2px rgba(0,0,0,.12)"></div>
<div class="vl" style="left:53px;top:188px;height:63px"></div>
<div class="vl" style="left:139px;top:188px;height:63px"></div>
<div class="vl" style="left:752px;top:188px;height:63px"></div>
<div class="vl" style="left:898px;top:188px;height:63px"></div>
<div class="vl" style="left:1044px;top:188px;height:63px"></div>
<div class="vl" style="left:1190px;top:188px;height:63px"></div>
<div class="vl" style="left:1412px;top:188px;height:63px"></div>
<div class="vl" style="left:1558px;top:188px;height:63px"></div>
<div class="cb" style="left:17px;top:208px"></div>
<div class="hd" style="left:64px;top:203px">Выкл./<br>вкл.</div>
<div class="hd" style="left:150px;top:211px">Кампания</div>
<div class="sort" style="left:582px;top:218px"></div>
<div class="hd" style="left:617px;top:203px">Покупки на<br>сайте</div>
<div class="sort" style="left:735px;top:218px"></div>
<div class="hd" style="left:763px;top:203px">Покупки в<br>Продуктах Meta</div>
<div class="sort" style="left:881px;top:218px"></div>
<div class="hd" style="left:909px;top:203px">ROAS для<br>покупок</div>
<div class="sort" style="left:1027px;top:218px"></div>
<div class="hd" style="left:1055px;top:195px">ROAS для<br>покупок на<br>сайте</div>
<div class="sort" style="left:1173px;top:218px"></div>
<div class="hd" style="left:1201px;top:211px">Цена за покупку</div>
<div class="sort" style="left:1395px;top:218px"></div>
<div class="hd" style="left:1423px;top:203px">Добавления в<br>корзину</div>
<div class="sort" style="left:1541px;top:218px"></div>
<div class="hd" style="left:1569px;top:195px">Добавление в<br>корзину на<br>сайте</div>
<div class="a" style="left:600px;top:187px;width:6px;height:742px;background:linear-gradient(to right,#d9d9d9,#f3f3f3 30%,#f7f7f7)"></div>
<div class="vl" style="left:606px;top:187px;height:742px;background:#e0e0e0"></div>
<div class="a" style="left:5px;top:878px;width:1682px;height:51px;background:#fff;box-shadow:0 -1px 2px rgba(0,0,0,.12)"></div>
<div class="vl" style="left:139px;top:878px;height:51px"></div>
<div class="vl" style="left:752px;top:878px;height:51px"></div>
<div class="vl" style="left:898px;top:878px;height:51px"></div>
<div class="vl" style="left:1044px;top:878px;height:51px"></div>
<div class="vl" style="left:1190px;top:878px;height:51px"></div>
<div class="vl" style="left:1412px;top:878px;height:51px"></div>
<div class="vl" style="left:1558px;top:878px;height:51px"></div>
<div class="a" style="left:600px;top:878px;width:6px;height:51px;background:linear-gradient(to right,#d9d9d9,#f3f3f3 30%,#f7f7f7)"></div>
<div class="vl" style="left:606px;top:878px;height:51px;background:#e0e0e0"></div>
<div class="a" style="left:598px;top:890px;width:2px;height:9px;background:#777"></div>
<div class="a t14" style="left:151px;top:887px;font-weight:700">Результаты 20 кампаний</div>
<div class="a" style="left:327px;top:889px;width:12px;height:12px;border-radius:50%;background:#333"></div>
<div class="a" style="left:332.3px;top:894px;width:1.6px;height:5px;background:#fff"></div>
<div class="a" style="left:332.3px;top:891.5px;width:1.6px;height:1.6px;background:#fff"></div>
<div class="a" style="left:152px;top:907px;font-size:12px;line-height:14px;color:#8a8d91;white-space:nowrap">Удаленные объекты не включены</div>
<div class="num" style="right:961px;top:887px;font-weight:700"><u>3 008</u></div>
<div class="sup" style="left:736px;top:889px;color:#222">[2]</div>
<div class="a" style="right:961px;top:909px;font-size:12px;line-height:14px;color:#8a8d91;white-space:nowrap">Всего</div>
<div class="a" style="left:881px;top:895px;width:11px;height:2px;background:#333"></div>
<div class="a" style="right:801px;top:909px;font-size:12px;line-height:14px;color:#8a8d91;white-space:nowrap">Всего</div>
<div class="num" style="right:669px;top:887px;font-weight:700"><u>7,93</u></div>
<div class="sup" style="left:1028px;top:889px;color:#222">[2]</div>
<div class="a" style="right:669px;top:909px;font-size:12px;line-height:14px;color:#8a8d91;white-space:nowrap">Среднее значение</div>
<div class="num" style="right:523px;top:887px;font-weight:700"><u>7,93</u></div>
<div class="sup" style="left:1174px;top:889px;color:#222">[2]</div>
<div class="a" style="right:523px;top:909px;font-size:12px;line-height:14px;color:#8a8d91;white-space:nowrap">Среднее значение</div>
<div class="num" style="right:301px;top:887px;font-weight:700"><u>5,95 $</u></div>
<div class="sup" style="left:1396px;top:889px;color:#222">[2]</div>
<div class="a" style="right:301px;top:909px;font-size:12px;line-height:14px;color:#8a8d91;white-space:nowrap">За действие</div>
<div class="num" style="right:155px;top:887px;font-weight:700"><u>5 667</u></div>
<div class="sup" style="left:1542px;top:889px;color:#222">[2]</div>
<div class="a" style="right:155px;top:909px;font-size:12px;line-height:14px;color:#8a8d91;white-space:nowrap">Всего</div>
<div class="num" style="right:8px;top:887px;font-weight:700"><u>5 667</u></div>
<div class="sup" style="left:1689px;top:889px;color:#222">[2]</div>
<div class="a" style="right:8px;top:909px;font-size:12px;line-height:14px;color:#8a8d91;white-space:nowrap">Всего</div>
<div class="a" style="left:1679px;top:310px;width:7px;height:417px;border-radius:4px;background:#c1c1c1"></div>
<div class="a" style="left:1687px;top:0;width:6px;height:929px;background:#fff"></div>
<div class="a" style="left:1692px;top:0;width:1px;height:929px;background:#d8d8d8"></div></body></html>
